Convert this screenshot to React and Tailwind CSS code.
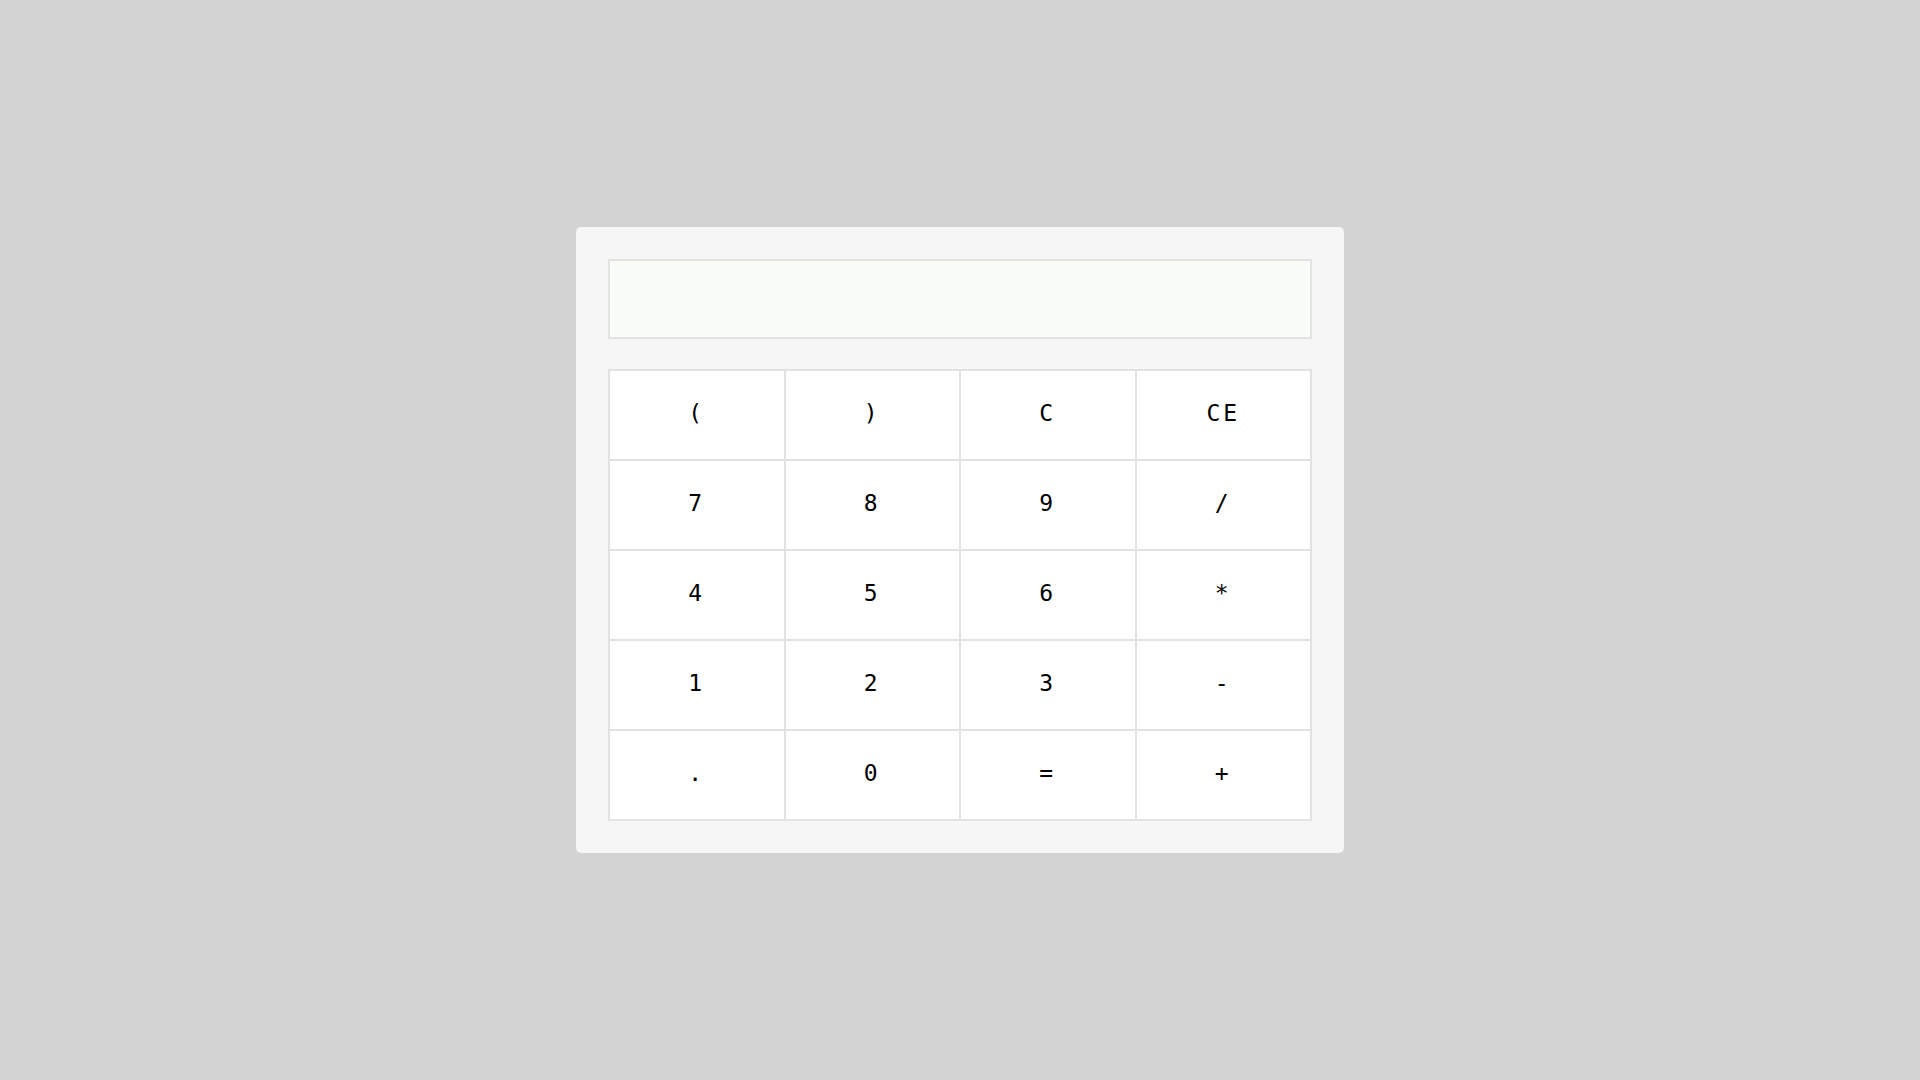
import React from "react";

const keys = ["(", ")", "C", "CE", "7", "8", "9", "/", "4", "5", "6", "*", "1", "2", "3", "-", ".", "0", "=", "+"];

export default function App() {
  return (
    <div className="min-h-screen w-full bg-[#d3d3d3] flex items-center justify-center">
      <div className="w-[768px] rounded-[5px] bg-[#f6f6f6] p-[32px]">
        <div className="h-[80px] w-full border-2 border-[#e2e2e2] bg-[#fafcf7]" />
        <div className="mt-[30px] grid grid-cols-4 border-l-2 border-t-2 border-[#e2e2e2] bg-white">
          {keys.map((k) => (
            <button
              key={k}
              className="h-[90px] border-r-2 border-b-2 border-[#e2e2e2] bg-white pb-[4px] text-black text-[23px] leading-none tracking-[3px] flex items-center justify-center"
              style={{ fontFamily: '"DejaVu Sans Mono", monospace' }}
            >
              {k}
            </button>
          ))}
        </div>
      </div>
    </div>
  );
}
